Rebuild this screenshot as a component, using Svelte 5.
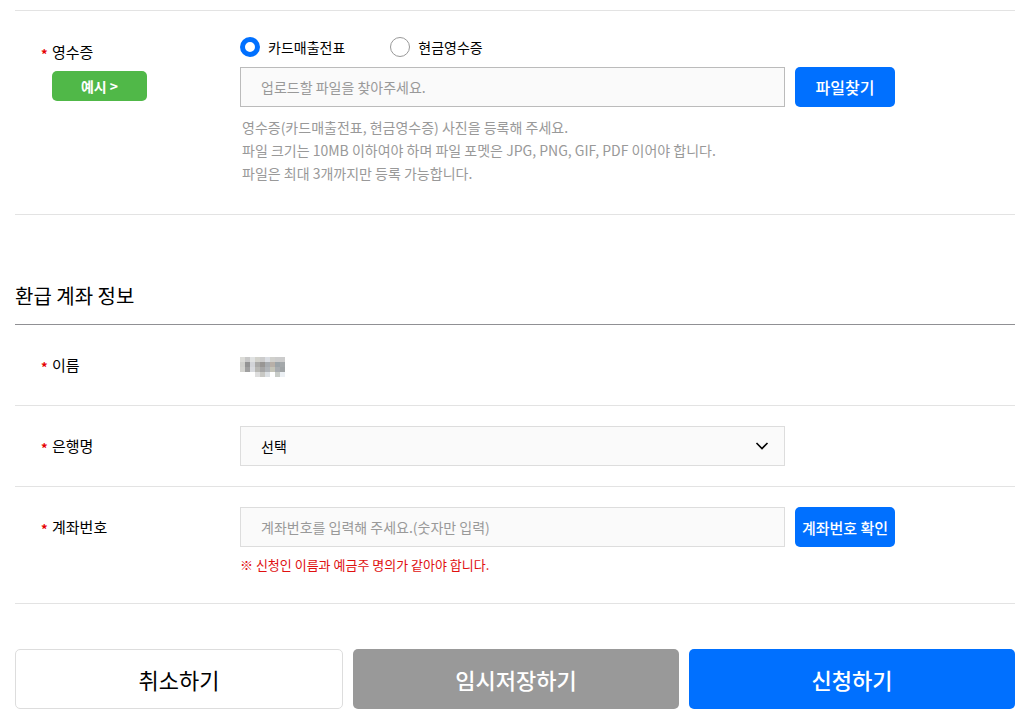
<script lang="ts">
  let receiptType = $state("card");
  let bank = $state("");
  let account = $state("");

  const receiptTypes = [
    { value: "card", label: "카드매출전표" },
    { value: "cash", label: "현금영수증" },
  ];

  // masked name, one colour per cell
  const mask = [
    ["#dcdcd8", "#c8c8c8", "#e0e2e2", "#d2d2cc", "#cccccc", "#dadde2", "#d0d0cc", "#cccccc", "#cccccc"],
    ["#d0d0cc", "#949494", "#d2d4d8", "#aaaaa8", "#989694", "#a8acb0", "#b8b0a8", "#9ca4a8", "#a4a8aa"],
    ["#d4d4d0", "#a0a0a0", "#d8dade", "#b8b8b4", "#a6a6a6", "#b0b4b8", "#c4c4b8", "#a8acb0", "#a0a4a6"],
    ["", "", "", "#dedede", "#c8c8c4", "#dce0e4", "", "#c8ccc8", "#ecf0f4"],
  ];
</script>

<form class="page" onsubmit={(e) => e.preventDefault()}>
  <section class="rows">
    <div class="row receipt">
      <div class="label">
        <span class="required">영수증</span>
        <button type="button" class="example">예시 &gt;</button>
      </div>
      <div class="content">
        <div class="radios" role="radiogroup" aria-label="영수증">
          {#each receiptTypes as type (type.value)}
            <label>
              <input type="radio" name="receipt" value={type.value} bind:group={receiptType} />
              {type.label}
            </label>
          {/each}
        </div>
        <div class="field">
          <input class="box file" type="text" readonly aria-label="영수증 파일" placeholder="업로드할 파일을 찾아주세요." />
          <button type="button" class="side">파일찾기</button>
        </div>
        <p class="hint">
          영수증(카드매출전표, 현금영수증) 사진을 등록해 주세요.<br />
          파일 크기는 10MB 이하여야 하며 파일 포멧은 JPG, PNG, GIF, PDF 이어야 합니다.<br />
          파일은 최대 3개까지만 등록 가능합니다.
        </p>
      </div>
    </div>
  </section>

  <h2>환급 계좌 정보</h2>
  <section class="rows account">
    <div class="row">
      <div class="label"><span class="required">이름</span></div>
      <div class="content name">
        <svg width="45" height="20" viewBox="0 0 9 4" shape-rendering="crispEdges" aria-hidden="true">
          {#each mask as line, y}
            {#each line as fill, x}
              {#if fill}
                <rect {x} {y} width="1" height="1" {fill} />
              {/if}
            {/each}
          {/each}
        </svg>
      </div>
    </div>
    <div class="row">
      <div class="label"><label class="required" for="bank">은행명</label></div>
      <div class="content">
        <div class="field">
          <div class="select">
            <select class="box" id="bank" bind:value={bank}>
              <option value="">선택</option>
            </select>
            <svg width="14" height="8" viewBox="0 0 14 8" aria-hidden="true">
              <path d="M1.5 1 7 6.5 12.5 1" fill="none" stroke="#000" stroke-width="1.6" />
            </svg>
          </div>
        </div>
      </div>
    </div>
    <div class="row">
      <div class="label"><label class="required" for="account">계좌번호</label></div>
      <div class="content">
        <div class="field">
          <input class="box" id="account" type="text" inputmode="numeric" bind:value={account} placeholder="계좌번호를 입력해 주세요.(숫자만 입력)" />
          <button type="button" class="side narrow">계좌번호 확인</button>
        </div>
        <p class="warning">※ 신청인 이름과 예금주 명의가 같아야 합니다.</p>
      </div>
    </div>
  </section>

  <div class="actions">
    <button type="button" class="cancel">취소하기</button>
    <button type="button" class="draft">임시저장하기</button>
    <button type="submit" class="submit">신청하기</button>
  </div>
</form>

<style>
  :global(body) {
    margin: 0;
    background: #fff;
  }

  .page {
    padding: 10px 14px 14px 15px;
    font-family: "Noto Sans CJK KR", sans-serif;
    font-size: 14px;
    color: #000;
  }

  button,
  input,
  select {
    font-family: inherit;
    margin: 0;
  }

  button {
    padding: 0;
    border: none;
    border-radius: 5px;
    color: #fff;
    font-weight: 500;
    cursor: pointer;
  }

  .rows {
    border-top: 1px solid #e3e3e3;
  }

  .rows.account {
    border-top-color: #909094;
  }

  .row {
    display: flex;
    padding: 20px 0;
    border-bottom: 1px solid #e3e3e3;
  }

  .row.receipt {
    padding: 26px 0 29px;
  }

  .label {
    flex: 0 0 225px;
    box-sizing: border-box;
    padding-left: 26px;
    font-size: 15px;
    line-height: 40px;
  }

  .receipt .label {
    padding-top: 4px;
    line-height: 22px;
  }

  .required {
    display: flex;
  }

  .required::before {
    content: "*";
    width: 11px;
    padding-top: 2px;
    color: #e60000;
    font-size: 13px;
    font-weight: 700;
    line-height: inherit;
    margin-bottom: -2px;
  }

  .example {
    display: block;
    width: 95px;
    height: 30px;
    margin: 8px 0 0 11px;
    background: #50b848;
    font-size: 14px;
    font-weight: 700;
    line-height: 30px;
  }

  .content {
    flex: 1;
    min-width: 0;
  }

  .radios {
    display: flex;
    gap: 45px;
    height: 20px;
    margin-bottom: 10px;
  }

  .radios label {
    display: flex;
    align-items: center;
    gap: 8px;
    line-height: 18px;
  }

  .radios input {
    appearance: none;
    box-sizing: border-box;
    width: 20px;
    height: 20px;
    border: 1px solid #999;
    border-radius: 50%;
    background: #fff;
  }

  .radios input:checked {
    border: 5px solid #0070ff;
  }

  .field {
    display: flex;
    gap: 10px;
    max-width: 655px;
  }

  .box {
    flex: 1;
    min-width: 0;
    box-sizing: border-box;
    height: 40px;
    padding: 0 20px;
    border: 1px solid #ddd;
    border-radius: 0;
    background: #fafafa;
    color: #000;
    font-size: 14px;
  }

  .box.file {
    border-color: #bbb;
  }

  .box::placeholder {
    color: #999;
    opacity: 1;
  }

  .select {
    position: relative;
    flex: 0 1 545px;
  }

  .select select {
    display: block;
    width: 100%;
    appearance: none;
  }

  .select svg {
    position: absolute;
    top: 16px;
    right: 16px;
    pointer-events: none;
  }

  .side {
    flex: 0 0 100px;
    height: 40px;
    background: #0070ff;
    font-size: 16px;
  }

  .side.narrow {
    font-size: 15px;
  }

  .name {
    box-sizing: border-box;
    height: 40px;
    padding-top: 12px;
  }

  .name svg {
    display: block;
  }

  .hint {
    margin: 9px 0 0 2px;
    color: #999;
    line-height: 23px;
  }

  .warning {
    margin: 7px 0;
    color: #e01010;
    font-size: 13px;
    line-height: 22px;
  }

  h2 {
    margin: 65px 0 13px;
    font-size: 20px;
    font-weight: 400;
    line-height: 31px;
  }

  .actions {
    display: flex;
    gap: 10px;
    margin-top: 45px;
  }

  .actions button {
    flex: 1;
    box-sizing: content-box;
    height: 60px;
    font-size: 22px;
  }

  .actions .cancel {
    height: 58px;
    border: 1px solid #ddd;
    background: #fff;
    color: #000;
    font-weight: 400;
  }

  .draft {
    background: #999;
  }

  .submit {
    background: #0070ff;
  }
</style>
